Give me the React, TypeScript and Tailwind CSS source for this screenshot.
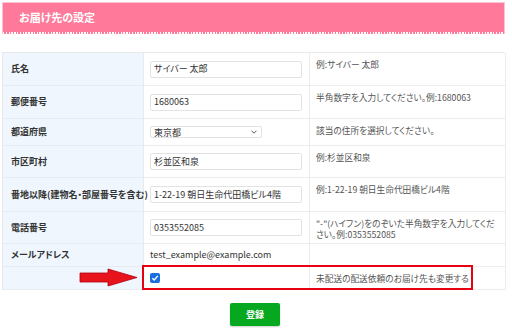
import React from "react";

type Row = {
  label: string;
  kind: "input" | "select" | "text" | "check";
  value?: string;
  note?: React.ReactNode;
  h: string;
  middle?: boolean;
};

const rows: Row[] = [
  { label: "氏名", kind: "input", value: "サイバー 太郎", note: "例:サイバー 太郎", h: "h-[33px]" },
  { label: "郵便番号", kind: "input", value: "1680063", note: "半角数字を入力してください。例:1680063", h: "h-[33px]" },
  { label: "都道府県", kind: "select", value: "東京都", note: "該当の住所を選択してください。", h: "h-[27px]" },
  { label: "市区町村", kind: "input", value: "杉並区和泉", note: "例:杉並区和泉", h: "h-[32px]" },
  {
    label: "番地以降(建物名・部屋番号を含む)",
    kind: "input",
    value: "1-22-19 朝日生命代田橋ビル4階",
    note: "例:1-22-19 朝日生命代田橋ビル4階",
    h: "h-[34px]",
  },
  {
    label: "電話番号",
    kind: "input",
    value: "0353552085",
    note: (
      <>
        <span className="block whitespace-nowrap">"-"(ハイフン)をのぞいた半角数字を入力してくだ</span>
        <span className="block whitespace-nowrap">さい。例:0353552085</span>
      </>
    ),
    h: "h-[32px]",
  },
  { label: "メールアドレス", kind: "text", value: "test_example@example.com", h: "h-[23px]" },
  { label: "", kind: "check", note: "未配送の配送依頼のお届け先も変更する", h: "h-[23px]", middle: true },
];

function Field({ row }: { row: Row }) {
  if (row.kind === "input") {
    return (
      <div className="w-[152px] h-[17px] border border-[#e3e3e3] rounded-[2px] bg-white flex items-center pl-[3px] text-[9px] text-[#333] whitespace-nowrap">
        {row.value}
      </div>
    );
  }
  if (row.kind === "select") {
    return (
      <div className="w-[112px] h-[12px] border border-[#e3e3e3] rounded-[2px] bg-white flex items-center justify-between pl-[3px] pr-[4px] text-[9px] text-[#333]">
        <span className="leading-none">{row.value}</span>
        <svg width="6" height="4" viewBox="0 0 6 4">
          <path d="M0.5 0.7 L3 3.2 L5.5 0.7" fill="none" stroke="#555" strokeWidth="1" />
        </svg>
      </div>
    );
  }
  if (row.kind === "text") {
    return <div className="text-[9px] text-[#333] whitespace-nowrap">{row.value}</div>;
  }
  return (
    <div className="w-[10px] h-[10px] rounded-[2px] bg-[#1a6fe0] flex items-center justify-center">
      <svg width="8" height="8" viewBox="0 0 8 8">
        <path d="M1.3 4.2 L3.2 6 L6.8 1.9" fill="none" stroke="#fff" strokeWidth="1.4" />
      </svg>
    </div>
  );
}

export default function App() {
  return (
    <div className="relative w-[512px] h-[333px] bg-white overflow-hidden font-['Noto_Sans_CJK_JP','Noto_Sans',sans-serif] [font-feature-settings:'palt']">
      <div className="pt-[2px] pl-[2px]">
        {/* Header */}
        <div className="w-[503px] h-[32px] bg-[#ff7a9a] border-t border-x border-[#ffc3d1] flex flex-col">
          <div className="flex-1 flex items-center pl-[16px] text-white font-bold text-[11px]">お届け先の設定</div>
          <div className="h-[1.5px] mb-[0.5px] bg-[repeating-linear-gradient(90deg,#ffffff_0px,#ffffff_1.5px,transparent_1.5px,transparent_2.8px)]" />
        </div>

        {/* Table */}
        <div className="mt-[18px] w-[503px] border-t border-l border-[#e9e9e9] grid grid-cols-[141px_166px_196px]">
          {rows.map((row, i) => (
            <React.Fragment key={i}>
              <div
                className={`${row.h} bg-[#eff6fd] border-b border-r border-[#e6ebf0] flex items-center pl-[8px] text-[9px] font-bold text-[#333] whitespace-nowrap`}
              >
                {row.label}
              </div>
              <div className={`${row.h} border-b border-r border-[#ececec] flex items-center pl-[6px]`}>
                <Field row={row} />
              </div>
              <div
                className={`${row.h} border-b border-r border-[#ececec] pl-[6px] text-[8.7px] text-[#555] leading-[11px] ${
                  row.middle ? "flex items-center" : "pt-[6px]"
                }`}
              >
                {row.note}
              </div>
            </React.Fragment>
          ))}
        </div>

        {/* Button */}
        <div className="mt-[13px] flex justify-center pr-[4px]">
          <div className="w-[50px] h-[23px] bg-[#05a81f] rounded-[2px] shadow-[0_1px_2px_rgba(0,0,0,0.2)] flex items-center justify-center text-white font-bold text-[9px]">
            登録
          </div>
        </div>
      </div>

      {/* Annotation: red box */}
      <div className="absolute left-[142px] top-[265px] w-[331px] h-[25px] border-2 border-[#e60012]" />

      {/* Annotation: red arrow */}
      <svg className="absolute left-[79px] top-[268px]" width="60" height="19" viewBox="0 0 60 19">
        <path
          d="M1 5 L29 5 L29 1 L58 9.5 L29 18 L29 14 L1 14 Z"
          fill="#e8141c"
          stroke="#b00010"
          strokeWidth="0.8"
        />
      </svg>
    </div>
  );
}
